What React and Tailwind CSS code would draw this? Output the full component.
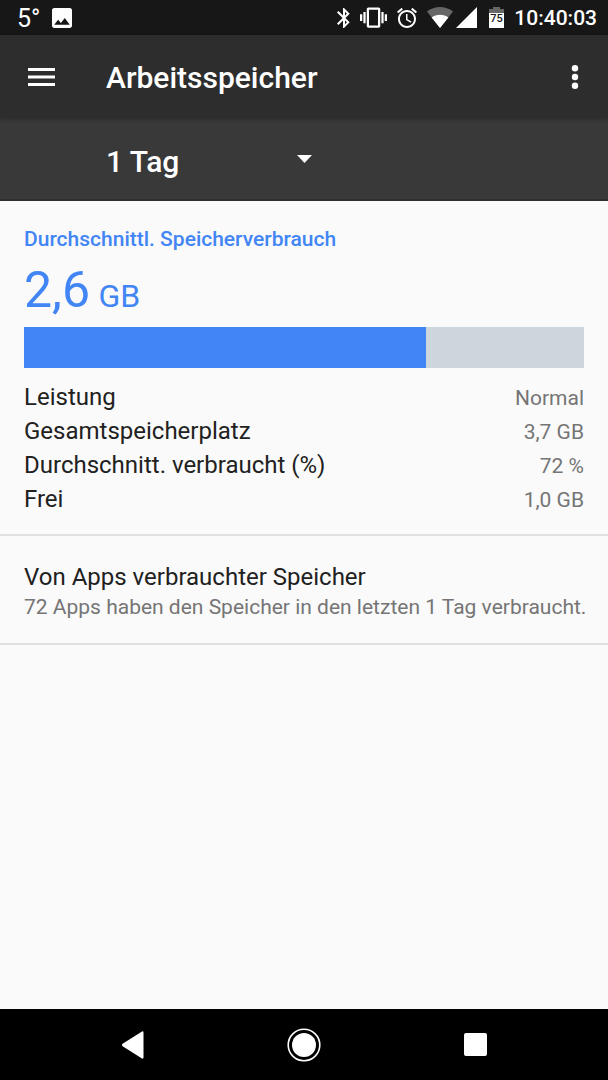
import React from "react";

function StatusBar() {
  return (
    <div className="flex h-[35px] items-center bg-[#171717] pr-[11px] pl-[17px] text-white">
      <span className="pt-0.5 text-[25px] leading-none">5°</span>
      <svg className="ml-3 size-5" viewBox="3 3 18 18" fill="currentColor" aria-hidden="true">
        <path d="M21 19V5c0-1.100-.9-2-2-2H5c-1.100 0-2 .9-2 2v14c0 1.100.9 2 2 2h14c1.100 0 2-.9 2-2zM8.500 13.500l2.500 3.010L14.500 12l4.500 6H5l3.500-4.500z" />
      </svg>
      <div className="ml-auto flex items-center">
        <svg className="size-6" viewBox="0 0 24 24" fill="currentColor" aria-hidden="true">
          <path d="M17.71 7.71L12 2h-1v7.590L6.410 5 5 6.410 10.590 12 5 17.590 6.410 19 11 14.410V22h1l5.710-5.710-4.300-4.290 4.300-4.290zM13 5.830l1.880 1.880L13 9.590V5.830zm1.880 10.460L13 18.170v-3.760l1.880 1.880z" />
        </svg>
        <svg className="ml-1 size-[27px]" viewBox="0 0 24 24" fill="currentColor" aria-hidden="true">
          <path d="M0 15h2V9H0v6zm3 2h2V7H3v10zm19-8v6h2V9h-2zm-3 8h2V7h-2v10zM16.500 3h-9C6.670 3 6 3.670 6 4.500v15c0 .83.67 1.500 1.500 1.500h9c.83 0 1.500-.67 1.500-1.500v-15c0-.83-.67-1.500-1.500-1.500zM16 19H8V5h8v14z" />
        </svg>
        <svg className="ml-2 size-6" viewBox="0 0 24 24" fill="currentColor" aria-hidden="true">
          <path d="M22 5.720l-4.600-3.860-1.290 1.530 4.600 3.860L22 5.720zM7.880 3.390L6.600 1.860 2 5.710l1.290 1.530 4.590-3.850zM12.500 8H11v6l4.750 2.850.75-1.230-4-2.370V8zM12 4c-4.970 0-9 4.030-9 9s4.020 9 9 9c4.970 0 9-4.030 9-9s-4.030-9-9-9zm0 16c-3.870 0-7-3.130-7-7s3.130-7 7-7 7 3.130 7 7-3.130 7-7 7z" />
        </svg>
        <svg className="ml-2 h-[21px] w-[26px]" viewBox="0 0 26 21" fill="currentColor" aria-hidden="true">
          <path d="M0 4.500C7.500-1.500 18.500-1.500 26 4.500L13 21z" fill="#666" />
          <path d="M4.600 10.400C9.200 6.800 16.800 6.800 21.400 10.400L13 21z" />
        </svg>
        <svg className="ml-[3px] size-[21px]" viewBox="0 0 21 21" fill="currentColor" aria-hidden="true">
          <path d="M21 0v21H0z" />
        </svg>
        <svg className="ml-3 h-[21px] w-[15px]" viewBox="0 0 15 21" aria-hidden="true">
          <path d="M4 0h7v2h4v5H0V2h4z" fill="#666" />
          <path d="M0 6h15v15H0z" fill="#fff" />
          <text x="7.500" y="15" textAnchor="middle" fill="#171717" className="font-[Roboto,sans-serif] text-[11px] font-medium">75</text>
        </svg>
        <span className="ml-2.5 pt-0.5 text-[21px] leading-none font-medium">10:40:03</span>
      </div>
    </div>
  );
}

function AppBar() {
  return (
    <header className="relative flex h-[83px] items-center bg-[#2d2d2d] text-white shadow-[0_1px_4px_rgba(0,0,0,0.3)]">
      <button type="button" aria-label="Menü" className="ml-4 flex size-[50px] items-center justify-center">
        <svg className="h-[18px] w-[27px]" viewBox="0 0 27 18" fill="currentColor" aria-hidden="true">
          <path d="M0 0h27v3H0zM0 7.500h27v3H0zM0 15h27v3H0z" />
        </svg>
      </button>
      <h1 className="ml-10 flex-1 pt-0.5 text-[30px] leading-9 font-medium">Arbeitsspeicher</h1>
      <button type="button" aria-label="Weitere Optionen" className="mr-2 flex size-[50px] items-center justify-center">
        <svg className="h-6 w-2" viewBox="0 0 8 24" fill="currentColor" aria-hidden="true">
          <circle cx="4" cy="3.300" r="3.200" />
          <circle cx="4" cy="12" r="3.200" />
          <circle cx="4" cy="20.700" r="3.200" />
        </svg>
      </button>
    </header>
  );
}

function PeriodPicker() {
  return (
    <div className="flex h-[83px] items-center border-b-2 border-[#2f2f2f] bg-[#393939] pl-[106px] text-white">
      <div className="grid w-[206px] items-center">
        <select
          aria-label="Zeitraum"
          className="col-start-1 row-start-1 h-12 appearance-none bg-transparent pt-1 text-[30px] font-medium"
          defaultValue="1 Tag"
        >
          <option>1 Tag</option>
        </select>
        <svg className="pointer-events-none col-start-1 row-start-1 h-2 w-[15px] justify-self-end" viewBox="0 0 15 8" fill="currentColor" aria-hidden="true">
          <path d="M0 0h15L7.500 8z" />
        </svg>
      </div>
    </div>
  );
}

const details = [
  ["Leistung", "Normal"],
  ["Gesamtspeicherplatz", "3,7 GB"],
  ["Durchschnitt. verbraucht (%)", "72 %"],
  ["Frei", "1,0 GB"],
];

function MemorySummary({ percent }) {
  return (
    <section className="border-b-2 border-[#e0e0e0] px-6 pt-6 pb-[18px]">
      <h2 className="text-[21px] leading-7 font-medium text-[#4285f4]">Durchschnittl. Speicherverbrauch</h2>
      <p className="text-[50px] leading-[74px] text-[#4285f4]">
        2,6 <span className="-ml-1 text-[32px] leading-none">GB</span>
      </p>
      <div
        role="progressbar"
        aria-label="Speicherverbrauch"
        aria-valuenow={percent}
        className="h-[41px] bg-[#ced6dd]"
      >
        <div className="h-full bg-[#4285f4]" style={{ width: `${percent}%` }} />
      </div>
      <dl className="mt-3">
        {details.map(([label, value]) => (
          <div key={label} className="flex h-[34px] items-baseline justify-between">
            <dt className="text-[24px] leading-[34px] text-[#212121]">{label}</dt>
            <dd className="text-[21px] leading-[34px] text-[#757575]">{value}</dd>
          </div>
        ))}
      </dl>
    </section>
  );
}

function NavigationBar() {
  return (
    <nav className="flex h-[71px] items-center justify-center gap-[123px] bg-black text-white">
      <button type="button" aria-label="Zurück" className="flex size-12 items-center justify-center">
        <svg className="h-7 w-[22px]" viewBox="0 0 22 28" fill="currentColor" aria-hidden="true">
          <path d="M.6 12.800 19.600.700Q21.500-.3 21.500 1.500v25q0 1.800-1.900.8L.6 15.200q-1.200-1.200 0-2.400z" />
        </svg>
      </button>
      <button type="button" aria-label="Startbildschirm" className="flex size-12 items-center justify-center">
        <svg className="size-[34px]" viewBox="0 0 34 34" fill="currentColor" aria-hidden="true">
          <circle cx="17" cy="17" r="15.800" fill="none" stroke="currentColor" strokeWidth="1.600" />
          <circle cx="17" cy="17" r="12" />
        </svg>
      </button>
      <button type="button" aria-label="Letzte Apps" className="flex size-12 items-center justify-center">
        <span className="size-[23px] rounded-[2px] bg-white" />
      </button>
    </nav>
  );
}

export default function App() {
  return (
    <div className="flex min-h-screen flex-col bg-[#fafafa] font-[Roboto,sans-serif]">
      <StatusBar />
      <AppBar />
      <PeriodPicker />
      <main className="flex-1">
        <MemorySummary percent={71.8} />
        <a href="#apps" className="block border-b-2 border-[#e0e0e0] pt-[25px] pr-5 pb-[22px] pl-6">
          <span className="block text-[24px] leading-8 text-[#212121]">Von Apps verbrauchter Speicher</span>
          <span className="block text-[21px] leading-7 text-[#757575]">
            72 Apps haben den Speicher in den letzten 1 Tag verbraucht.
          </span>
        </a>
      </main>
      <NavigationBar />
    </div>
  );
}
